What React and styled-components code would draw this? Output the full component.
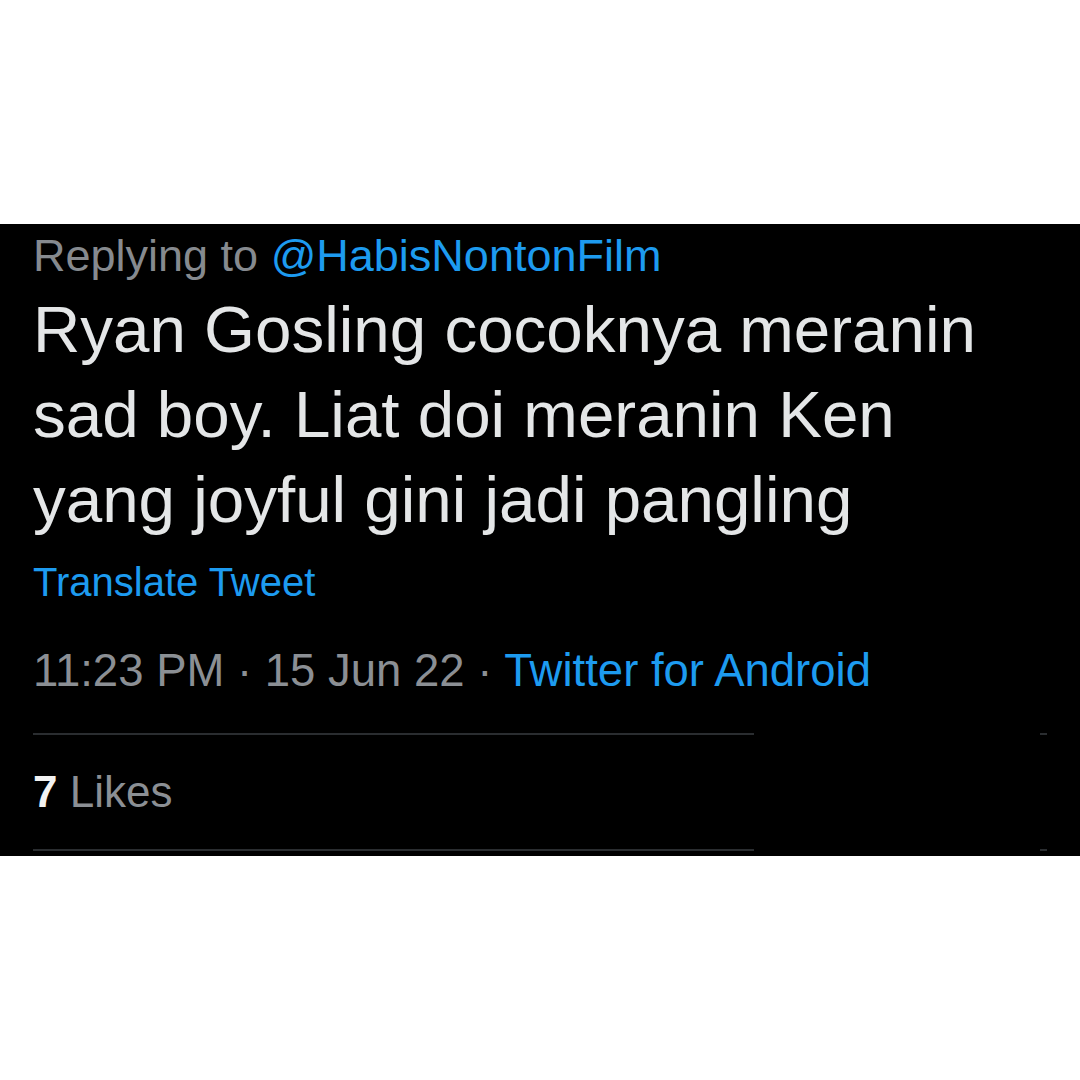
import React from "react";
import styled, { createGlobalStyle } from "styled-components";

const GlobalStyle = createGlobalStyle`
    html, body {
        margin: 0;
        padding: 0;
        background: #FFFFFF;
    }
    body {
        width: 1080px;
        height: 1080px;
        overflow: hidden;
        font-family: "Liberation Sans", Arial, sans-serif;
    }
`;

const Page = styled.div`
    width: 1080px;
    height: 1080px;
    padding-top: 224px;
    box-sizing: border-box;
`;

const TweetCard = styled.div`
    background: #000000;
    height: 632px;
    box-sizing: border-box;
    padding-top: 6px;
    display: flex;
    flex-direction: column;
`;

const Block = styled.div`
    padding: 0 33px;
`;

const Replying = styled.div`
    font-size: 45px;
    line-height: 52px;
    color: #868a8f;
    white-space: nowrap;

    span {
        color: #1d9bf0;
    }
`;

const Body = styled.p`
    margin: 5px 0 0;
    font-size: 65.5px;
    line-height: 85px;
    color: #e4e6e7;
`;

const Translate = styled.div`
    margin-top: 16px;
    font-size: 40px;
    line-height: 48px;
    color: #1d9bf0;
`;

const Meta = styled.div`
    margin-top: 37px;
    font-size: 45.5px;
    line-height: 56px;
    color: #8b8f94;
    white-space: nowrap;

    span {
        color: #1d9bf0;
    }
`;

const Divider = styled.div`
    display: flex;
    justify-content: space-between;
    padding: 0 33px;
    margin-top: ${p => p.$top}px;

    &::before {
        content: "";
        width: 721px;
        height: 2px;
        background: #2a2d30;
    }

    &::after {
        content: "";
        width: 7px;
        height: 2px;
        background: #2a2d30;
    }
`;

const Likes = styled.div`
    margin-top: 29px;
    font-size: 44px;
    line-height: 56px;
    color: #8b8f94;

    b {
        color: #f2f2f2;
        font-weight: 700;
    }
`;

export default function App() {
    return (
        <>
            <GlobalStyle />
            <Page>
                <TweetCard>
                    <Block>
                        <Replying>Replying to <span>@HabisNontonFilm</span></Replying>
                        <Body>
                            Ryan Gosling cocoknya meranin<br />
                            sad boy. Liat doi meranin Ken<br />
                            yang joyful gini jadi pangling
                        </Body>
                        <Translate>Translate Tweet</Translate>
                        <Meta>11:23 PM · 15 Jun 22 · <span>Twitter for Android</span></Meta>
                    </Block>
                    <Divider $top={34} />
                    <Block>
                        <Likes><b>7</b> Likes</Likes>
                    </Block>
                    <Divider $top={29} />
                </TweetCard>
            </Page>
        </>
    );
}
